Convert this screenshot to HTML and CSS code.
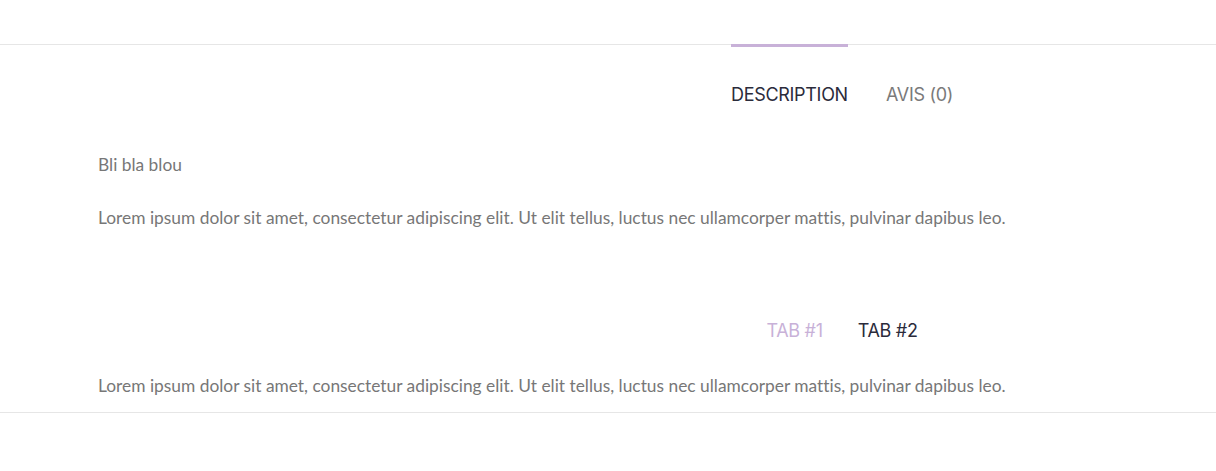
FILE: index.html
```html
<!DOCTYPE html>
<html lang="fr">
<head>
<meta charset="utf-8">
<title>Produit</title>
<link rel="stylesheet" href="styles.css">
</head>
<body>
<div class="top-bar"></div>
<section class="product-tabs">
  <nav class="tabs tabs-main">
    <a class="tab tab-active">DESCRIPTION</a>
    <a class="tab tab-muted">AVIS (0)</a>
  </nav>
  <div class="panel panel-main">
    <p class="para">Bli bla blou</p>
    <p class="para">Lorem ipsum dolor sit amet, consectetur adipiscing elit. Ut elit tellus, luctus nec ullamcorper mattis, pulvinar dapibus leo.</p>
  </div>
  <nav class="tabs tabs-sub">
    <a class="tab tab-accent">TAB #1</a>
    <a class="tab tab-dark">TAB #2</a>
  </nav>
  <div class="panel panel-sub">
    <p class="para">Lorem ipsum dolor sit amet, consectetur adipiscing elit. Ut elit tellus, luctus nec ullamcorper mattis, pulvinar dapibus leo.</p>
  </div>
</section>
</body>
</html>
```
FILE: styles.css
```css
html, body {
  margin: 0;
  padding: 0;
  background: #ffffff;
}
body {
  font-family: "Lato", "Liberation Sans", sans-serif;
  color: #777777;
  font-variant-ligatures: none;
}
.top-bar {
  height: 44px;
  border-bottom: 1px solid #e6e6e6;
}
.product-tabs {
  border-bottom: 1px solid #e6e6e6;
}
.tabs {
  display: flex;
  justify-content: center;
  padding-left: 468px;
  gap: 38px;
}
.tabs-main {
  margin-top: -1px;
}
.tab {
  font-family: "Inter", "Liberation Sans", sans-serif;
  font-size: 18px;
  font-weight: 400;
  letter-spacing: -0.3px;
  line-height: 24px;
  text-decoration: none;
}
.tabs-main .tab {
  padding-top: 36px;
  border-top: 3px solid transparent;
}
.tab-active {
  color: #2b2b3b;
  border-top-color: #c8b1d8 !important;
}
.tab-muted {
  color: #7a7a7a;
}
.tabs-sub {
  margin-top: 89px;
  gap: 35px;
}
.tab-accent {
  color: #c8b1d8;
}
.tab-dark {
  color: #2b2b3b;
}
.panel {
  padding-left: 98px;
}
.panel-main {
  padding-top: 45px;
}
.panel-sub {
  padding-top: 30px;
  padding-bottom: 14px;
}
.para {
  margin: 0 0 28px;
  font-size: 17.35px;
  line-height: 25px;
}
.panel-sub .para {
  margin: 0;
}
```
